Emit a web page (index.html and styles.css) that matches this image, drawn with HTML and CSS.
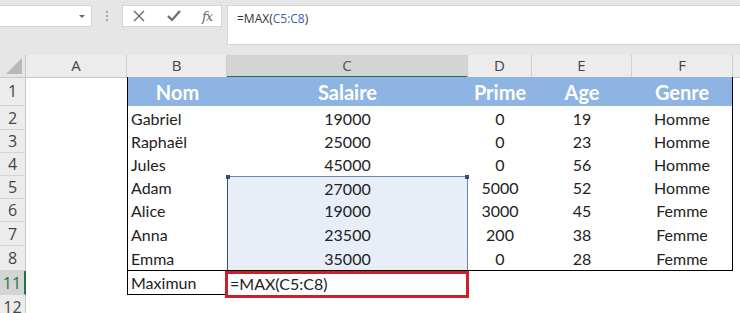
FILE: index.html
```html
<!DOCTYPE html>
<html>
<head>
<meta charset="utf-8">
<link rel="stylesheet" href="styles.css">
</head>
<body>
<div class="app">
  <div class="toolbar">
    <div class="namebox"><span class="caret"></span></div>
    <div class="grip"><i></i><i></i><i></i></div>
    <div class="fnbox">
      <svg class="ico" width="14" height="14" viewBox="0 0 14 14"><path d="M2 2L12 12M12 2L2 12" stroke="#6a6a6a" stroke-width="1.4" fill="none"/></svg>
      <svg class="ico" width="16" height="14" viewBox="0 0 16 14"><path d="M2 7L6 11L14 2" stroke="#6a6a6a" stroke-width="2.2" fill="none"/></svg>
      <span class="fx">fx</span>
    </div>
    <div class="formula">=MAX(<span class="ref">C5:C8</span>)</div>
  </div>

  <div class="sheet">
    <div class="row hdr">
      <div class="corner"><span class="tri"></span></div>
      <div class="ch">A</div><div class="ch">B</div><div class="ch ch-sel">C</div><div class="ch">D</div><div class="ch">E</div><div class="ch">F</div><div class="ch end"></div>
    </div>

    <div class="row r1">
      <div class="rh">1</div><div class="c"></div>
      <div class="c th b-l">Nom</div><div class="c th">Salaire</div><div class="c th">Prime</div><div class="c th">Age</div><div class="c th b-r">Genre</div><div class="c"></div>
    </div>
    <div class="row r24">
      <div class="rh">2</div><div class="c"></div>
      <div class="c b-l left">Gabriel</div><div class="c mid">19000</div><div class="c mid">0</div><div class="c mid">19</div><div class="c mid b-r">Homme</div><div class="c"></div>
    </div>
    <div class="row r23">
      <div class="rh">3</div><div class="c"></div>
      <div class="c b-l left">Raphaël</div><div class="c mid">25000</div><div class="c mid">0</div><div class="c mid">23</div><div class="c mid b-r">Homme</div><div class="c"></div>
    </div>
    <div class="row r23">
      <div class="rh">4</div><div class="c"></div>
      <div class="c b-l left">Jules</div><div class="c mid">45000</div><div class="c mid">0</div><div class="c mid">56</div><div class="c mid b-r">Homme</div><div class="c"></div>
    </div>
    <div class="row r23">
      <div class="rh">5</div><div class="c"></div>
      <div class="c b-l left">Adam</div><div class="c mid sel sel-top"><span class="hnd hl"></span><span class="hnd hr"></span>27000</div><div class="c mid">5000</div><div class="c mid">52</div><div class="c mid b-r">Homme</div><div class="c"></div>
    </div>
    <div class="row r23">
      <div class="rh">6</div><div class="c"></div>
      <div class="c b-l left">Alice</div><div class="c mid sel">19000</div><div class="c mid">3000</div><div class="c mid">45</div><div class="c mid b-r">Femme</div><div class="c"></div>
    </div>
    <div class="row r24">
      <div class="rh">7</div><div class="c"></div>
      <div class="c b-l left">Anna</div><div class="c mid sel">23500</div><div class="c mid">200</div><div class="c mid">38</div><div class="c mid b-r">Femme</div><div class="c"></div>
    </div>
    <div class="row r25 last">
      <div class="rh">8</div><div class="c"></div>
      <div class="c b-l b-b left">Emma</div><div class="c mid sel b-b">35000</div><div class="c mid b-b">0</div><div class="c mid b-b">28</div><div class="c mid b-r b-b">Femme</div><div class="c"></div>
    </div>
    <div class="row r24">
      <div class="rh rh-sel">11</div><div class="c"></div>
      <div class="c b-l b-b b-rr left">Maximun</div><div class="c edit"><span class="redbox"></span>=MAX(C5:C8)</div><div class="c"></div><div class="c"></div><div class="c"></div><div class="c"></div>
    </div>
    <div class="row r24">
      <div class="rh">12</div><div class="c"></div>
      <div class="c"></div><div class="c"></div><div class="c"></div><div class="c"></div><div class="c"></div><div class="c"></div>
    </div>
  </div>
</div>
</body>
</html>
```

FILE: styles.css
```css
* { box-sizing: border-box; }
html, body { margin: 0; padding: 0; background: #fff; }
body { width: 740px; height: 313px; overflow: hidden; }

.app { width: 740px; }

.toolbar {
  height: 55px;
  background: #e6e6e6;
  display: flex;
  align-items: flex-start;
  padding-top: 5px;
  position: relative;
}
.namebox {
  width: 92px; height: 22px;
  background: #fff;
  border: 1px solid #d6d6d6;
  border-left: none;
  position: relative;
}
.caret {
  position: absolute; right: 6px; top: 9px;
  width: 0; height: 0;
  border-left: 3px solid transparent;
  border-right: 3px solid transparent;
  border-top: 3px solid #666;
}
.grip {
  width: 30px; height: 22px;
  display: flex; flex-direction: column; align-items: center; justify-content: center; gap: 2px;
}
.grip i { display: block; width: 2px; height: 2px; background: #a8a8a8; }
.fnbox {
  width: 100px; height: 22px;
  background: #fff;
  border: 1px solid #d6d6d6;
  display: flex; align-items: center;
  padding-left: 9px;
  gap: 20px;
}
.fnbox .ico { display: block; }
.fx {
  font-family: "DejaVu Serif", "Liberation Serif", serif;
  font-style: italic;
  font-size: 13px;
  color: #666;
  letter-spacing: -1px;
}
.formula {
  margin-left: 5px;
  flex: 1;
  height: 40px;
  background: #fff;
  border: 1px solid #d6d6d6;
  border-right: none;
  font-family: "Open Sans", "Noto Sans", sans-serif;
  font-size: 12px;
  color: #333;
  padding: 4px 0 0 9px;
}
.ref { color: #3a62a8; }

.sheet { background: #fff; }
.row {
  display: grid;
  grid-template-columns: 26px 101px 100px 241px 64px 100px 101px 1fr;
}
.hdr { height: 22px; background: #e6e6e6; }
.r1 { height: 29px; }
.r23 { height: 23px; }
.r24 { height: 24px; }
.r25 { height: 25px; }

.corner { position: relative; border-right: 1px solid #c8c8c8; border-bottom: 1px solid #c8c8c8; }
.tri {
  position: absolute; right: 3px; bottom: 3px;
  width: 0; height: 0;
  border-left: 16px solid transparent;
  border-bottom: 16px solid #b8b8b8;
}
.ch {
  font-family: "Open Sans", "Noto Sans", sans-serif;
  font-size: 15px;
  color: #444;
  text-align: center;
  line-height: 21px;
  border-right: 1px solid #cfcfcf;
  border-bottom: 1px solid #c8c8c8;
  background: #ececec;
}
.ch.end { border-right: none; }
.ch-sel { background: #d4d4d4; border-bottom: 2px solid #217346; color: #555; }

.rh {
  background: #ececec;
  border-right: 1px solid #c8c8c8;
  border-bottom: 1px solid #d4d4d4;
  font-family: "Open Sans", "Noto Sans", sans-serif;
  font-size: 16px;
  color: #444;
  display: flex; align-items: center; justify-content: center;
}
.rh-sel { background: #d4d4d4; color: #217346; border-right: 2px solid #217346; }

.c {
  font-family: Lato, "Open Sans", sans-serif;
  font-size: 16px;
  color: #222;
  display: flex; align-items: center;
  white-space: nowrap;
  position: relative;
}
.left { padding-left: 3px; }
.mid { justify-content: center; }
.th {
  background: #8db4e2;
  color: #fff;
  font-weight: bold;
  font-size: 20px;
  justify-content: center;
}
.b-l { border-left: 1px solid #000; }
.b-r { border-right: 1px solid #000; }
.b-b { border-bottom: 1px solid #000; }
.b-rr { border-right: 1px solid #000; }

.sel {
  background: #e8eef8;
  border-left: 1px solid #2f4f7a;
  border-right: 1px solid #6b86a8;
}
.sel-top { border-top: 1px solid #6b86a8; }
.hnd {
  position: absolute; top: -2px;
  width: 4px; height: 4px;
  background: #2f4f7a;
}
.hnd.hl { left: -2px; }
.hnd.hr { right: -2px; }

.edit { padding-left: 3px; }
.redbox {
  position: absolute;
  left: -2px; right: -1px; top: 0; bottom: -3px;
  border: 3px solid #c9202e;
}
```
